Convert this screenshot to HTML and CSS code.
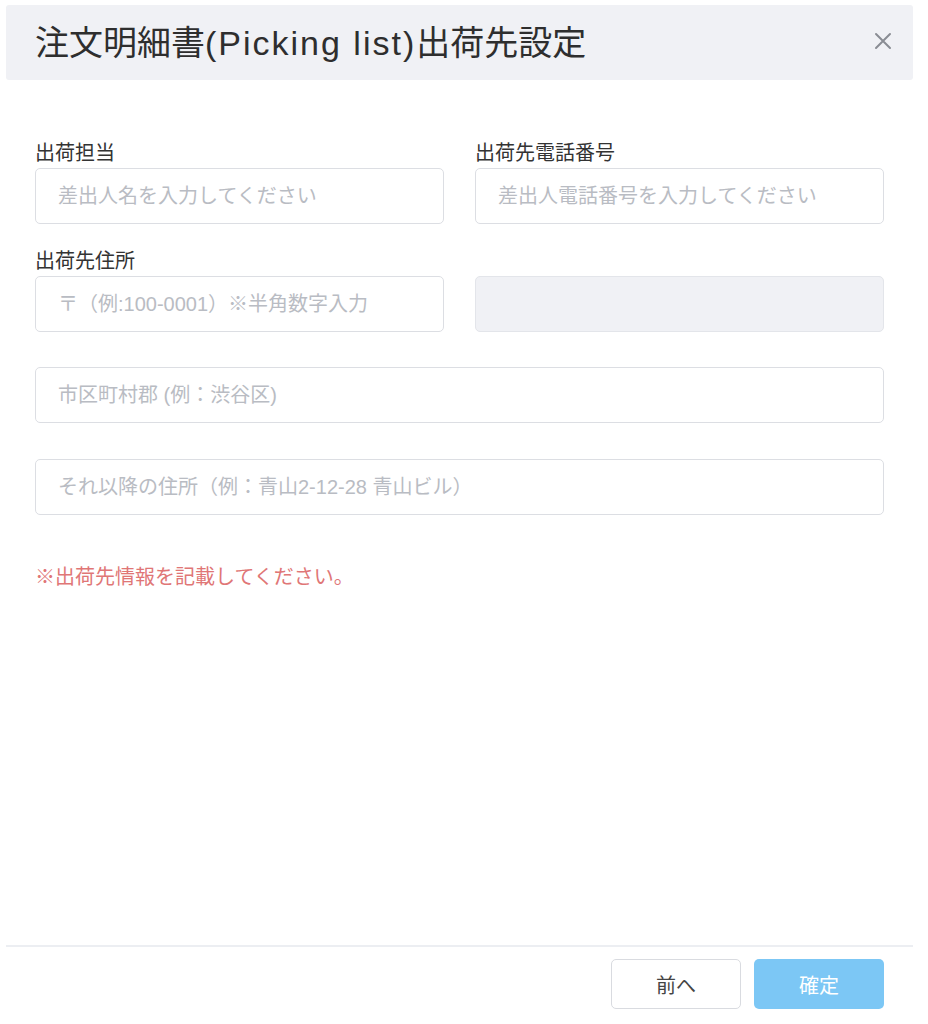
FILE: index.html
```html
<!DOCTYPE html>
<html lang="ja">
<head>
    <meta charset="UTF-8">
    <meta name="viewport" content="width=device-width, initial-scale=1.0">
    <title>出荷先設定</title>
    <link rel="stylesheet" href="styles.css">
</head>
<body>
    <div class="modal">
        <div class="modal-header">
            <h1>注文明細書<span class="latin">(Picking list)</span>出荷先設定</h1>
            <button class="close-btn" type="button" aria-label="閉じる">
                <svg width="20" height="20" viewBox="0 0 20 20">
                    <path d="M3 3 L17 17 M17 3 L3 17" stroke="#8a8d94" stroke-width="2" stroke-linecap="round" fill="none"/>
                </svg>
            </button>
        </div>

        <form class="modal-body">
            <div class="form-row">
                <div class="field">
                    <label for="staff">出荷担当</label>
                    <input type="text" id="staff" placeholder="差出人名を入力してください">
                </div>
                <div class="field">
                    <label for="tel">出荷先電話番号</label>
                    <input type="text" id="tel" placeholder="差出人電話番号を入力してください">
                </div>
            </div>

            <div class="form-row">
                <div class="field">
                    <label for="zip">出荷先住所</label>
                    <input type="text" id="zip" placeholder="〒（例:100-0001）※半角数字入力">
                </div>
                <div class="field">
                    <label class="blank">&nbsp;</label>
                    <input type="text" class="disabled" disabled>
                </div>
            </div>

            <input type="text" class="wide" placeholder="市区町村郡 (例：渋谷区)">
            <input type="text" class="wide" placeholder="それ以降の住所（例：青山2-12-28 青山ビル）">

            <p class="error">※出荷先情報を記載してください。</p>
        </form>

        <div class="modal-footer">
            <button type="button" class="btn btn-back">前へ</button>
            <button type="button" class="btn btn-ok">確定</button>
        </div>
    </div>
</body>
</html>
```

FILE: styles.css
```css
* {
    margin: 0;
    padding: 0;
    box-sizing: border-box;
}

body {
    font-family: "Liberation Sans", "Noto Sans CJK JP", sans-serif;
    background-color: #fff;
    color: #333;
}

.modal {
    width: 907px;
    margin: 5px 0 0 6px;
    height: 1019px;
    display: flex;
    flex-direction: column;
}

.modal-header {
    height: 75px;
    background-color: #f0f1f5;
    border-radius: 3px;
    display: flex;
    align-items: center;
    justify-content: space-between;
    padding: 0 18px 4px 29px;
}

.modal-header h1 {
    font-size: 34px;
    font-weight: 400;
    color: #2e2e2e;
}

.modal-header .latin {
    letter-spacing: 2px;
}

.close-btn {
    background: none;
    border: none;
    cursor: pointer;
    width: 24px;
    height: 24px;
    display: flex;
    align-items: center;
    justify-content: center;
}

.modal-body {
    flex: 1;
    padding: 62px 29px 0;
    display: flex;
    flex-direction: column;
}

.form-row {
    display: grid;
    grid-template-columns: 1fr 1fr;
    column-gap: 31px;
}

.form-row + .form-row {
    margin-top: 26px;
}

.field {
    display: flex;
    flex-direction: column;
}

.field label {
    font-size: 20px;
    line-height: 22px;
    color: #333;
    margin-bottom: 4px;
}

input {
    height: 56px;
    border: 1px solid #dcdee3;
    border-radius: 5px;
    padding: 0 22px;
    font-family: inherit;
    font-size: 20px;
    color: #333;
    background-color: #fff;
    outline: none;
}

input::placeholder {
    color: #b9bcc3;
}

input.disabled {
    background-color: #f0f1f5;
    border-color: #e3e5ea;
}

input.wide {
    margin-top: 35px;
}

input.wide + input.wide {
    margin-top: 36px;
}

.error {
    margin-top: 49px;
    font-size: 20px;
    line-height: 26px;
    color: #e07676;
}

.modal-footer {
    border-top: 2px solid #eceef2;
    display: flex;
    justify-content: flex-end;
    gap: 13px;
    padding: 12px 29px 0;
    height: 79px;
}

.btn {
    width: 130px;
    height: 50px;
    border-radius: 5px;
    font-family: inherit;
    font-size: 20px;
    cursor: pointer;
}

.btn-back {
    background-color: #fff;
    border: 1px solid #d9dbe0;
    color: #444;
}

.btn-ok {
    background-color: #7cc7f5;
    border: none;
    color: #fff;
}
```
